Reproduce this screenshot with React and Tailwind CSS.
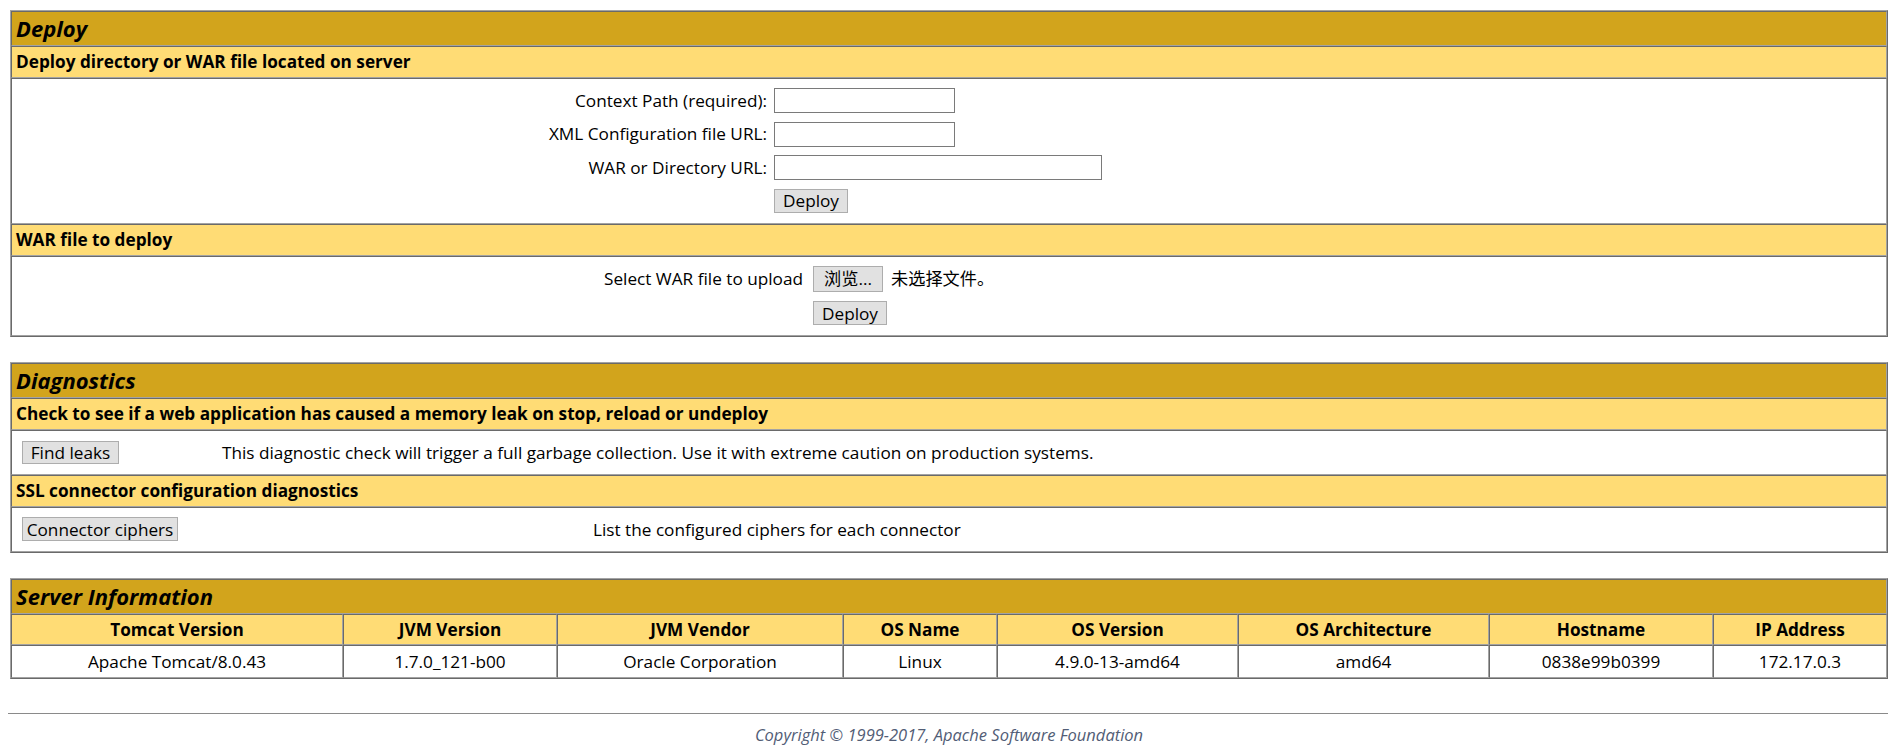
import React from "react";

const cellBorder =
  "border border-t-[#6a6a6a] border-l-[#6a6a6a] border-b-[#a3a3a3] border-r-[#a3a3a3]";

function Box({ className = "", children }) {
  return (
    <div
      className={`border border-t-[#a3a3a3] border-l-[#a3a3a3] border-b-[#6a6a6a] border-r-[#6a6a6a] ${className}`}
    >
      {children}
    </div>
  );
}

function Title({ children }) {
  return (
    <div className={`${cellBorder} h-[35px] bg-[#D2A41C] pl-[4px] flex items-center text-[22px] font-bold italic`}>
      {children}
    </div>
  );
}

function SubHeader({ children }) {
  return (
    <div className={`${cellBorder} h-[32px] bg-[#FFDC75] pl-[4px] flex items-center font-bold`}>
      {children}
    </div>
  );
}

function Btn({ w, h = "h-[24px]", children }) {
  return (
    <button className={`${w} ${h} bg-[#e1e1e1] border border-[#adadad] leading-none text-black`}>
      {children}
    </button>
  );
}

export default function App() {
  const cols = [
    ["Tomcat Version", "Apache Tomcat/8.0.43"],
    ["JVM Version", "1.7.0_121-b00"],
    ["JVM Vendor", "Oracle Corporation"],
    ["OS Name", "Linux"],
    ["OS Version", "4.9.0-13-amd64"],
    ["OS Architecture", "amd64"],
    ["Hostname", "0838e99b0399"],
    ["IP Address", "172.17.0.3"],
  ];

  return (
    <div className="min-h-[745px] bg-white pt-[10px] pl-[10px] pr-[8px] text-black text-[17.2px] font-['Open_Sans','Noto_Sans_CJK_SC',sans-serif]">
      {/* Deploy */}
      <Box>
        <Title>Deploy</Title>
        <SubHeader>Deploy directory or WAR file located on server</SubHeader>
        <div className={`${cellBorder} h-[146px] pt-[5px]`}>
          <div className="grid grid-cols-[755px_1fr] gap-x-[7px] auto-rows-[33.5px] items-center">
            <div className="text-right">Context Path (required):</div>
            <input className="w-[181px] h-[25px] border border-[#7a7a7a] bg-white" />
            <div className="text-right">XML Configuration file URL:</div>
            <input className="w-[181px] h-[25px] border border-[#7a7a7a] bg-white" />
            <div className="text-right">WAR or Directory URL:</div>
            <input className="w-[328px] h-[25px] border border-[#7a7a7a] bg-white" />
            <div />
            <div>
              <Btn w="w-[74px]">Deploy</Btn>
            </div>
          </div>
        </div>
        <SubHeader>WAR file to deploy</SubHeader>
        <div className={`${cellBorder} h-[80px] pt-[4px]`}>
          <div className="grid grid-cols-[791px_1fr] gap-x-[10px] auto-rows-[35px] items-center">
            <div className="text-right">Select WAR file to upload</div>
            <div className="flex items-center gap-[8px]">
              <Btn w="w-[70px]" h="h-[26px]">浏览...</Btn>
              <span>未选择文件。</span>
            </div>
            <div />
            <div>
              <Btn w="w-[74px]">Deploy</Btn>
            </div>
          </div>
        </div>
      </Box>

      {/* Diagnostics */}
      <Box className="mt-[25px]">
        <Title>Diagnostics</Title>
        <SubHeader>Check to see if a web application has caused a memory leak on stop, reload or undeploy</SubHeader>
        <div className={`${cellBorder} h-[45px] flex items-center`}>
          <div className="w-[210px] pl-[10px]">
            <Btn w="w-[97px]" h="h-[23px]">Find leaks</Btn>
          </div>
          <span>This diagnostic check will trigger a full garbage collection. Use it with extreme caution on production systems.</span>
        </div>
        <SubHeader>SSL connector configuration diagnostics</SubHeader>
        <div className={`${cellBorder} h-[45px] flex items-center`}>
          <div className="w-[581px] pl-[10px]">
            <Btn w="w-[156px]">Connector ciphers</Btn>
          </div>
          <span>List the configured ciphers for each connector</span>
        </div>
      </Box>

      {/* Server Information */}
      <Box className="mt-[25px]">
        <Title>Server Information</Title>
        <div className="grid grid-cols-[332px_214px_286px_154px_241px_251px_224px_1fr]">
          {cols.map(([h]) => (
            <div key={h} className={`${cellBorder} h-[31px] bg-[#FFDC75] flex items-center justify-center font-bold`}>
              {h}
            </div>
          ))}
          {cols.map(([h, v]) => (
            <div key={h + "v"} className={`${cellBorder} h-[33px] flex items-center justify-center`}>
              {v}
            </div>
          ))}
        </div>
      </Box>

      <div className="mt-[34px] -ml-[2px] h-px bg-[#8a8a8a]" />
      <div className="mt-[11px] leading-[20px] text-center italic text-[#525D76] text-[16.5px]">
        Copyright © 1999-2017, Apache Software Foundation
      </div>
    </div>
  );
}
